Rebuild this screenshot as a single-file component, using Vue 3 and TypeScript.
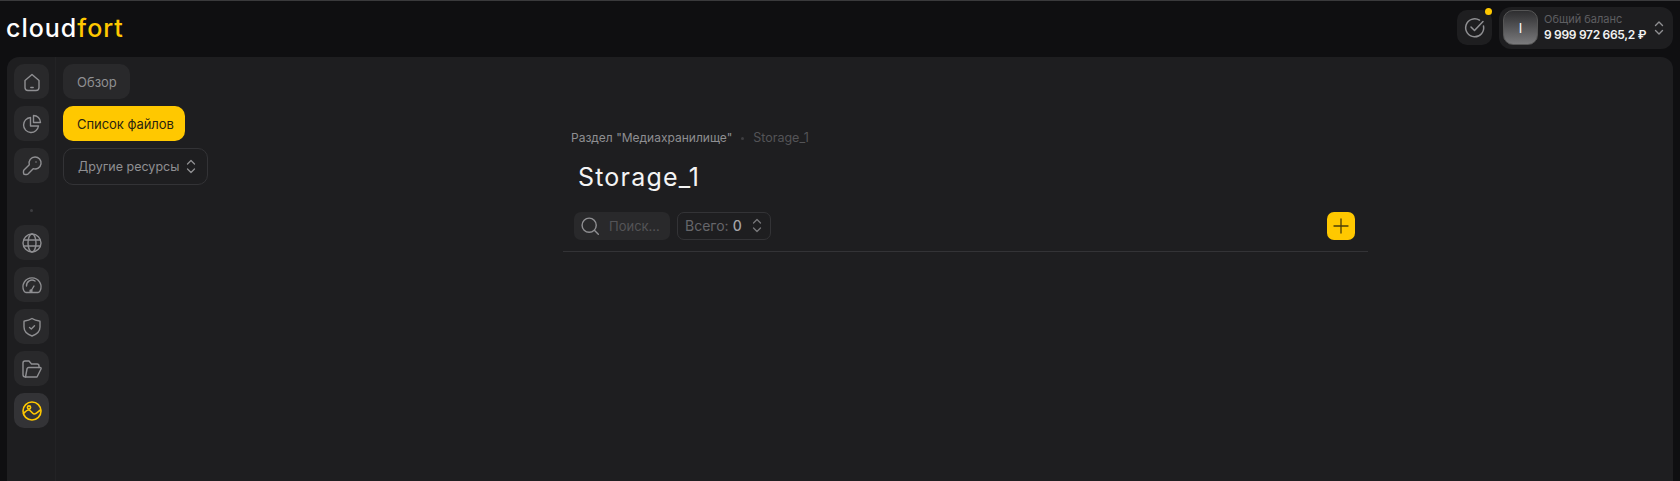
<script setup lang="ts">
// Страница медиахранилища: шапка, сайдбар, подменю и пустой список файлов
const topIcons = [
  'M5 10.500 12 4.500l7 6V17.500a3 3 0 0 1-3 3H8a3 3 0 0 1-3-3ZM10.800 17.500h2.400',
  'M10.500 5.500a7.500 7.500 0 1 0 8 8.500h-8ZM13.500 3.500a7 7 0 0 1 7 7h-7Z',
  'M15 3a6 6 0 1 1-1.800 11.700L8 20a2 2 0 0 1-1.500.5H5A1.500 1.500 0 0 1 3.500 19v-1.500A2 2 0 0 1 4 16l5.300-5.300A6 6 0 0 1 15 3ZM16 8h.01',
]
</script>

<template>
  <div class="page">
    <header class="topbar">
      <div class="logo">cloud<span class="logo-accent">fort</span></div>
      <div class="top-actions">
        <button class="task-btn">
          <svg width="24" height="24" viewBox="0 0 24 24" fill="none" stroke="#8f8f92" stroke-width="1.5" stroke-linecap="round" stroke-linejoin="round">
            <path d="M20.500 10A9 9 0 1 1 16.500 4.200" />
            <path d="m8 11 3.500 3.500L20 5.500" />
          </svg>
          <span class="task-dot"></span>
        </button>
        <div class="balance">
          <div class="avatar">I</div>
          <div class="balance-text">
            <div class="balance-label">Общий баланс</div>
            <div class="balance-value">9 999 972 665,2 ₽</div>
          </div>
          <svg class="chevrons" width="12" height="16" viewBox="0 0 12 16" fill="none" stroke="#8f8f92" stroke-width="1.4" stroke-linecap="round" stroke-linejoin="round">
            <path d="m2.500 5.500 3.500-3.500 3.500 3.500M2.500 10.500 6 14l3.500-3.500" />
          </svg>
        </div>
      </div>
    </header>

    <div class="panel">
      <aside class="sidebar">
        <button v-for="d in topIcons" :key="d" class="side-btn">
          <svg width="24" height="24" viewBox="0 0 24 24" fill="none" stroke="#8f8f92" stroke-width="1.4" stroke-linecap="round" stroke-linejoin="round">
            <path :d="d" />
          </svg>
        </button>
        <span class="side-dot"></span>
        <button class="side-btn">
          <svg width="24" height="24" viewBox="0 0 24 24" fill="none" stroke="#8f8f92" stroke-width="1.4">
            <circle cx="12" cy="12" r="9" />
            <ellipse cx="12" cy="12" rx="4" ry="9" />
            <path d="M3.500 9h17M3.500 15h17" />
          </svg>
        </button>
        <button class="side-btn">
          <svg width="24" height="24" viewBox="0 0 24 24" fill="none" stroke="#8f8f92" stroke-width="1.4" stroke-linecap="round" stroke-linejoin="round">
            <path d="M6 19.500h12a2.500 2.500 0 0 0 2-1.500 9 9 0 1 0-16 0 2.500 2.500 0 0 0 2 1.500ZM6.500 13A5.500 5.500 0 0 1 15 8M11 18l3-5" />
            <circle cx="11" cy="18" r="1" />
          </svg>
        </button>
        <button class="side-btn">
          <svg width="24" height="24" viewBox="0 0 24 24" fill="none" stroke="#8f8f92" stroke-width="1.4" stroke-linecap="round" stroke-linejoin="round">
            <path d="M12 3.500c2.200 1.400 4.700 2.200 7.500 2.500.3 0 .5.300.5.500V12c0 4.300-3.200 7.300-8 9-4.800-1.700-8-4.700-8-9V6.500c0-.2.200-.5.500-.5 2.800-.3 5.300-1.100 7.500-2.500Z" />
            <path d="m9.500 12.500 1.800 1.500 3.200-3.200" />
          </svg>
        </button>
        <button class="side-btn">
          <svg width="24" height="24" viewBox="0 0 24 24" fill="none" stroke="#8f8f92" stroke-width="1.4" stroke-linecap="round" stroke-linejoin="round">
            <path d="M5.500 20A2.500 2.500 0 0 1 3 17.500V6a2 2 0 0 1 2-2h4l2.500 3H17a2 2 0 0 1 2 2v1.500" />
            <path d="M5.500 20H17l4-8a1 1 0 0 0-.9-1.500H8.500a1.500 1.500 0 0 0-1.400 1L5.500 20Z" />
          </svg>
        </button>
        <button class="side-btn side-btn-active">
          <svg width="24" height="24" viewBox="0 0 24 24" fill="none" stroke="#ffc800" stroke-width="1.6" stroke-linecap="round" stroke-linejoin="round">
            <circle cx="12" cy="12" r="9" />
            <circle cx="9" cy="8.500" r="1.600" />
            <path d="M3.500 14.500c2-2 3.500-4 5.500-3.500s3 3.500 5 4 4-2.500 6.500-4" />
          </svg>
        </button>
      </aside>

      <nav class="subnav">
        <button class="nav-btn">Обзор</button>
        <button class="nav-btn nav-btn-active">Список файлов</button>
        <button class="nav-btn nav-btn-outline">
          Другие ресурсы
          <svg width="10" height="15" viewBox="0 0 10 15" fill="none" stroke="#8f8f92" stroke-width="1.300" stroke-linecap="round" stroke-linejoin="round">
            <path d="m1.500 5 3.500-3.500L8.500 5M1.500 10 5 13.500 8.500 10" />
          </svg>
        </button>
      </nav>

      <main class="content">
        <div class="crumbs">
          <span class="crumb">Раздел "Медиахранилище"</span>
          <span class="crumb-dot"></span>
          <span class="crumb-current">Storage_1</span>
        </div>
        <h1 class="title">Storage_1</h1>
        <div class="toolbar">
          <div class="search">
            <svg width="20" height="20" viewBox="0 0 24 24" fill="none" stroke="#8f8f92" stroke-width="1.700" stroke-linecap="round">
              <circle cx="11" cy="11" r="8.500" />
              <path d="m17.500 17.500 4.500 4.500" />
            </svg>
            <span class="search-text">Поиск...</span>
          </div>
          <div class="total">
            <span class="total-label">Всего:</span>
            <span class="total-value">0</span>
            <svg width="10" height="15" viewBox="0 0 10 15" fill="none" stroke="#77777a" stroke-width="1.300" stroke-linecap="round" stroke-linejoin="round">
              <path d="m1.500 5 3.500-3.500L8.500 5M1.500 10 5 13.500 8.500 10" />
            </svg>
          </div>
          <button class="add-btn">
            <svg width="20" height="20" viewBox="0 0 20 20" fill="none" stroke="#4a3d08" stroke-width="1.300" stroke-linecap="round">
              <path d="M10 3v14M3 10h14" />
            </svg>
          </button>
        </div>
      </main>
    </div>
  </div>
</template>

<style scoped>
.page {
  height: 481px;
  display: flex;
  flex-direction: column;
  background: #0f0f11;
  border-top: 1px solid #3a3a3c;
  box-sizing: border-box;
  overflow: hidden;
  font-family: Inter, "Noto Sans", sans-serif;
}

button {
  font-family: inherit;
  border: none;
  padding: 0;
}

.topbar {
  height: 56px;
  flex-shrink: 0;
  display: flex;
  justify-content: space-between;
  align-items: center;
  padding: 0 6px 0 6px;
}

.logo {
  font-family: Inter, sans-serif;
  font-size: 25px;
  font-weight: 500;
  letter-spacing: 1px;
  color: #fff;
  margin-top: -3px;
}

.logo-accent {
  color: #ffc800;
}

.top-actions {
  display: flex;
  align-items: center;
  gap: 7px;
  margin-top: -3px;
  margin-right: 1px;
}

.task-btn {
  position: relative;
  width: 35px;
  height: 35px;
  border-radius: 10px;
  background: #1e1e20;
  display: flex;
  align-items: center;
  justify-content: center;
}

.task-dot {
  position: absolute;
  top: -2px;
  right: 0;
  width: 7px;
  height: 7px;
  border-radius: 50%;
  background: #ffc800;
}

.balance {
  width: 174px;
  height: 42px;
  box-sizing: border-box;
  border-radius: 12px;
  background: #1e1e20;
  display: flex;
  align-items: center;
  padding: 0 8px 0 4px;
  gap: 6px;
}

.avatar {
  width: 35px;
  height: 35px;
  flex-shrink: 0;
  border-radius: 10px;
  border: 1px solid #555;
  box-sizing: border-box;
  background: linear-gradient(180deg, #2e2e30, #7a7a7c);
  color: #fff;
  font-size: 13px;
  display: flex;
  align-items: center;
  justify-content: center;
}

.balance-text {
  flex: 1;
  min-width: 0;
}

.balance-label {
  font-size: 11px;
  line-height: 14px;
  color: #5f5f62;
}

.balance-value {
  font-size: 12px;
  line-height: 18px;
  font-weight: 600;
  color: #f2f2f2;
  white-space: nowrap;
  letter-spacing: -0.3px;
}

.panel {
  flex: 1;
  margin: 0 7px;
  display: flex;
  background: #1e1e20;
  border-radius: 12px 12px 0 0;
}

.sidebar {
  width: 49px;
  flex-shrink: 0;
  box-sizing: border-box;
  border-right: 1px solid #232325;
  padding: 7px 0 0 1px;
  display: flex;
  flex-direction: column;
  align-items: center;
  gap: 7px;
}

.side-btn {
  width: 35px;
  height: 35px;
  flex-shrink: 0;
  border-radius: 10px;
  background: #29292b;
  display: flex;
  align-items: center;
  justify-content: center;
}

.side-btn-active {
  background: #333336;
}

.side-dot {
  width: 3px;
  height: 3px;
  flex-shrink: 0;
  border-radius: 50%;
  background: #3d3d40;
  margin: 19px 0 6px;
}

.subnav {
  width: 507px;
  flex-shrink: 0;
  box-sizing: border-box;
  padding: 7px 0 0 7px;
  display: flex;
  flex-direction: column;
  align-items: flex-start;
  gap: 7px;
}

.nav-btn {
  height: 35px;
  padding: 0 13px 0 14px;
  border-radius: 10px;
  background: #29292b;
  color: #8f8f92;
  font-size: 13px;
  display: flex;
  align-items: center;
  gap: 7px;
  white-space: nowrap;
}

.nav-btn-active {
  background: #ffc800;
  color: #2a2410;
  padding-right: 11.500px;
  letter-spacing: -0.05px;
}

.nav-btn-outline {
  background: transparent;
  border: 1px solid #333336;
  height: 37px;
  font-size: 12.500px;
  padding-right: 11px;
}

.content {
  width: 805px;
  box-sizing: border-box;
}

.crumbs {
  display: flex;
  align-items: center;
  margin: 73px 0 0 8px;
  font-size: 12px;
  line-height: 16px;
}

.crumb {
  color: #8f8f92;
}

.crumb-dot {
  width: 3px;
  height: 3px;
  border-radius: 50%;
  background: #3d3d40;
  margin: 0 9px;
}

.crumb-current {
  color: #545457;
  font-size: 12.500px;
}

.title {
  margin: 13px 0 0 15px;
  font-size: 25px;
  line-height: 36px;
  font-weight: 400;
  letter-spacing: 1.200px;
  color: #f4f4f4;
}

.toolbar {
  margin-top: 17px;
  height: 40px;
  box-sizing: border-box;
  padding: 0 13px 12px 11px;
  border-bottom: 1px solid #333336;
  display: flex;
  align-items: center;
  gap: 7px;
}

.search {
  width: 96px;
  height: 28px;
  box-sizing: border-box;
  border-radius: 7px;
  background: #29292b;
  display: flex;
  align-items: center;
  padding-left: 6px;
  gap: 9px;
}

.search-text {
  font-size: 13px;
  color: #545457;
}

.total {
  width: 94px;
  height: 28px;
  box-sizing: border-box;
  border: 1px solid #333336;
  border-radius: 7px;
  display: flex;
  align-items: center;
  padding: 0 8px 0 7px;
  font-size: 14px;
}

.total-label {
  color: #66666a;
}

.total-value {
  color: #a5a5a8;
  font-weight: 500;
  margin-left: 4px;
  flex: 1;
}

.add-btn {
  margin-left: auto;
  width: 28px;
  height: 28px;
  border-radius: 7px;
  background: #ffc800;
  display: flex;
  align-items: center;
  justify-content: center;
}
</style>

<style>
body {
  background: #0f0f11;
}
</style>
